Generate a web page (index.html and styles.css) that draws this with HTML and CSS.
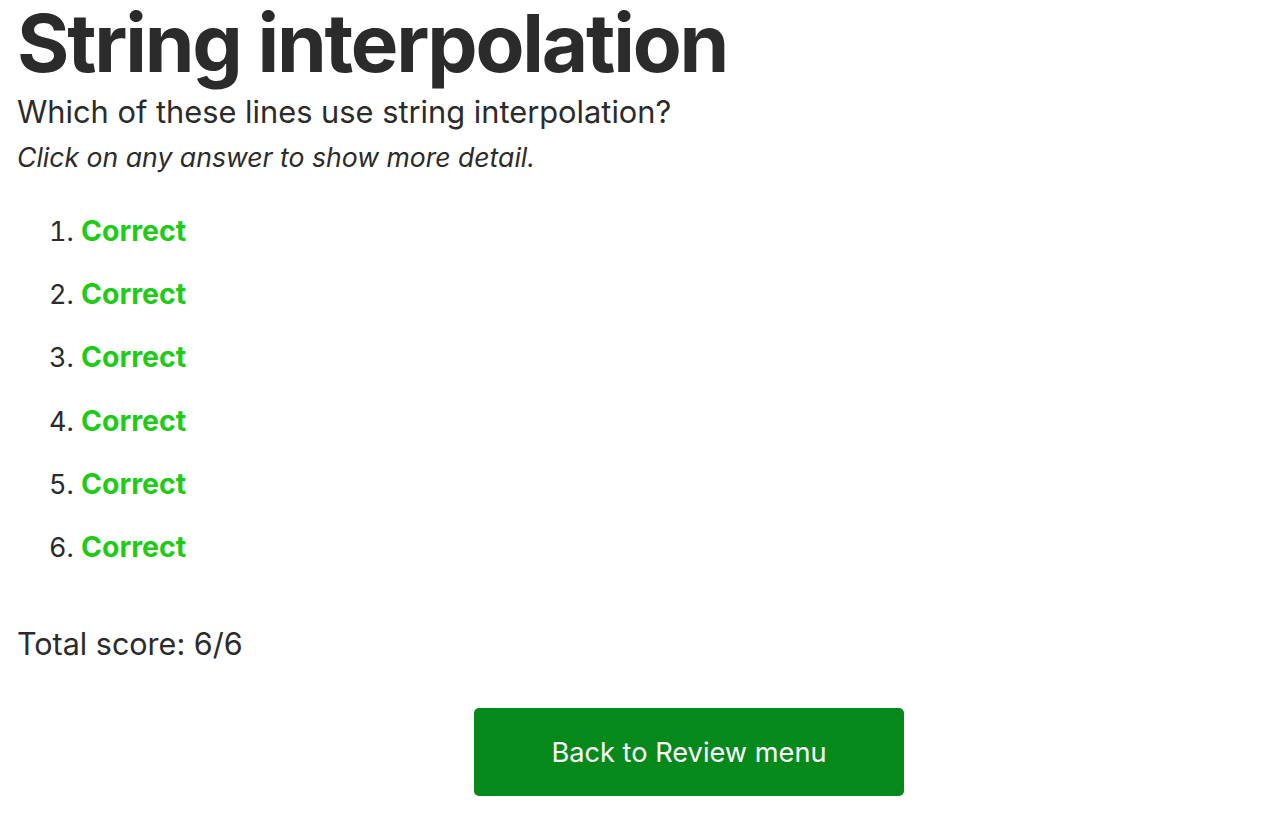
FILE: index.html
```html
<!DOCTYPE html>
<html lang="en">
<head>
<meta charset="utf-8">
<title>String interpolation</title>
<link rel="stylesheet" href="styles.css">
</head>
<body>
<main class="page">
  <h1 class="title">String interpolation</h1>
  <p class="question">Which of these lines use string interpolation?</p>
  <p class="hint">Click on any answer to show more detail.</p>
  <ol class="answers">
    <li><span class="correct">Correct</span></li>
    <li><span class="correct">Correct</span></li>
    <li><span class="correct">Correct</span></li>
    <li><span class="correct">Correct</span></li>
    <li><span class="correct">Correct</span></li>
    <li><span class="correct">Correct</span></li>
  </ol>
  <p class="score">Total score: 6/6</p>
  <div class="actions">
    <button class="back-btn" type="button">Back to Review menu</button>
  </div>
</main>
</body>
</html>
```
FILE: styles.css
```css
html, body {
  margin: 0;
  padding: 0;
  background: #ffffff;
}
body {
  font-family: Inter, "Noto Sans", sans-serif;
  color: #2b2b2b;
}
.page {
  padding: 0 17px;
}
.title {
  margin: 0 0 4px;
  font-size: 80px;
  font-weight: 700;
  line-height: 86px;
  letter-spacing: -2.2px;
}
.question {
  margin: 0;
  font-size: 30.8px;
  line-height: 44px;
}
.hint {
  margin: 0;
  font-size: 26.6px;
  font-style: italic;
  line-height: 46px;
}
.answers {
  margin: 20px 0 0;
  padding-left: 64px;
  font-size: 27px;
}
.answers li {
  line-height: 63.2px;
}
.correct {
  color: #1ecb16;
  font-weight: 700;
  font-size: 28.4px;
  line-height: 1;
}
.score {
  margin: 45px 0 0;
  font-size: 30.5px;
  line-height: 40px;
}
.actions {
  display: flex;
  justify-content: center;
  margin-top: 44px;
  padding-left: 98px;
}
.back-btn {
  width: 430px;
  height: 88px;
  border: none;
  border-radius: 5px;
  background: #06891b;
  color: #ffffff;
  font-family: Inter, "Noto Sans", sans-serif;
  font-size: 27.2px;
}
```
